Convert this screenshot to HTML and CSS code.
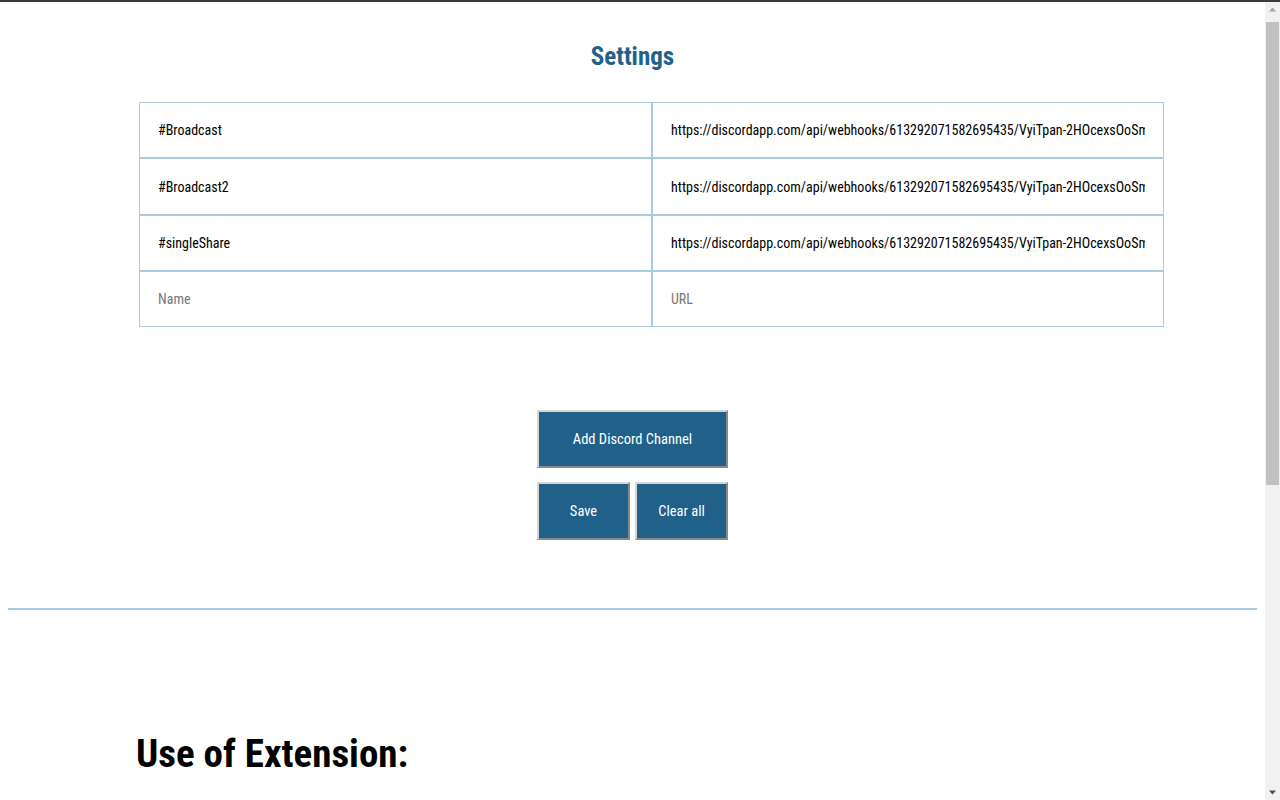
FILE: index.html
```html
<!DOCTYPE html>
<html lang="en">
<head>
<meta charset="utf-8">
<title>Settings</title>
<link rel="stylesheet" href="styles.css">
</head>
<body>
<div class="window">
  <main class="page">
    <h1 class="title">Settings</h1>
    <div class="channels">
      <input class="field" type="text" value="#Broadcast">
      <input class="field" type="text" value="https://discordapp.com/api/webhooks/613292071582695435/VyiTpan-2HOcexsOoSm">
      <input class="field" type="text" value="#Broadcast2">
      <input class="field" type="text" value="https://discordapp.com/api/webhooks/613292071582695435/VyiTpan-2HOcexsOoSm">
      <input class="field" type="text" value="#singleShare">
      <input class="field" type="text" value="https://discordapp.com/api/webhooks/613292071582695435/VyiTpan-2HOcexsOoSm">
      <input class="field" type="text" placeholder="Name">
      <input class="field" type="text" placeholder="URL">
    </div>
    <div class="actions">
      <button class="btn btn-wide" type="button">Add Discord Channel</button>
      <div class="btn-row">
        <button class="btn btn-half" type="button">Save</button>
        <button class="btn btn-half" type="button">Clear all</button>
      </div>
    </div>
    <hr class="divider">
    <section class="usage">
      <h2 class="usage-title">Use of Extension:</h2>
    </section>
  </main>
  <div class="scrollbar" aria-hidden="true">
    <div class="sb-btn">
      <svg width="15" height="15" viewBox="0 0 15 15"><path d="M4 9.5 L7.5 5.5 L11 9.5 Z" fill="#a3a3a3"/></svg>
    </div>
    <div class="sb-track">
      <div class="sb-thumb"></div>
    </div>
    <div class="sb-btn">
      <svg width="15" height="15" viewBox="0 0 15 15"><path d="M4 5.5 L11 5.5 L7.5 9.5 Z" fill="#505050"/></svg>
    </div>
  </div>
</div>
</body>
</html>
```
FILE: styles.css
```css
html, body {
  margin: 0;
  padding: 0;
  background: #fff;
}
body {
  font-family: "Roboto Condensed", "Liberation Sans", sans-serif;
  color: #000;
}
.window {
  box-sizing: border-box;
  height: 800px;
  border-top: 2px solid #3a3a3a;
  display: flex;
  overflow: hidden;
}
.page {
  flex: 1;
  min-width: 0;
  padding: 8px;
  overflow: hidden;
}
.title {
  margin: 32px 0 0;
  font-size: 25px;
  line-height: 30px;
  font-weight: bold;
  text-align: center;
  color: #23618a;
}
.channels {
  margin: 30px 0 0 131px;
  width: 1025px;
  display: grid;
  grid-template-columns: 513px 512px;
  grid-template-rows: 56px 57px 56px 56px;
}
.field {
  box-sizing: border-box;
  height: 100%;
  width: 100%;
  margin: 0;
  padding: 0 18px;
  border: 1px solid #a9cbe2;
  font-family: inherit;
  font-size: 14px;
  color: #000;
  background: #fff;
  outline: none;
}
.field::placeholder {
  color: #777;
}
.actions {
  margin-top: 83px;
  display: flex;
  flex-direction: column;
  align-items: center;
  gap: 14px;
}
.btn-row {
  display: flex;
  gap: 5px;
}
.btn {
  box-sizing: border-box;
  height: 58px;
  margin: 0;
  padding: 0;
  background: #216089;
  color: #fff;
  font-family: inherit;
  font-size: 14.5px;
  border: 2px solid;
  border-color: #d6d6d6 #8a8a8a #8a8a8a #d6d6d6;
}
.btn-wide {
  width: 191px;
}
.btn-half {
  width: 93px;
}
.divider {
  margin: 68px 0 0;
  border: 0;
  border-top: 2px solid #a9c8df;
  height: 0;
}
.usage {
  margin-left: 128px;
}
.usage-title {
  margin: 121px 0 0;
  font-size: 39px;
  line-height: 46px;
  font-weight: bold;
}
.scrollbar {
  width: 15px;
  flex: none;
  display: flex;
  flex-direction: column;
  background: #f1f1f1;
}
.sb-btn {
  height: 15px;
  flex: none;
}
.sb-btn svg {
  display: block;
}
.sb-track {
  flex: 1;
  padding: 5px 1px 0;
}
.sb-thumb {
  height: 463px;
  background: #c1c1c1;
}
```
